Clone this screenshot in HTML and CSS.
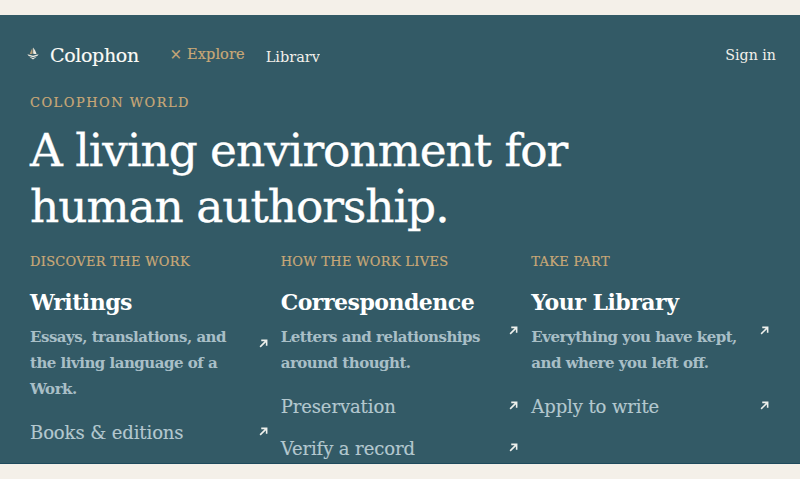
FILE: index.html
```html
<!DOCTYPE html>
<html lang="en">
<head>
<meta charset="utf-8">
<title>Colophon World</title>
<link rel="stylesheet" href="styles.css">
</head>
<body>
<main class="panel">
  <header class="nav">
    <a class="brand">
      <svg class="logo" viewBox="0 0 12 13" aria-hidden="true">
        <path class="logo-dark" d="M5.4 1 5.6 6.8 2.6 7.2C3.4 5 4.4 3 5.4 1z"/>
        <path class="logo-sail" d="M6.2.6C7.6 2.4 8.8 4.6 9.6 7.2L6.2 6.8z"/>
        <path class="logo-page" d="M.4 7.2 6 8.8l5.6-1.6-1 1.5L6 10.2 1.4 8.7z"/>
        <path class="logo-page" d="M2 9.6 6 11l4-1.4L6 12.6z"/>
      </svg>
      <span>Colophon</span>
    </a>
    <a class="explore"><span class="close">×</span>Explore</a>
    <a class="library">Library</a>
    <a class="signin">Sign in</a>
  </header>
  <p class="eyebrow">COLOPHON WORLD</p>
  <h1>A living environment for<br>human authorship.</h1>
  <section class="columns">
    <div class="column">
      <h2 class="label">DISCOVER THE WORK</h2>
      <a class="item">
        <div class="item-body"><h3>Writings</h3><p>Essays, translations, and the living language of a Work.</p></div>
        <svg class="arrow" viewBox="0 0 8 8"><path d="M1 7 6.6 1.4M2 1.2h4.8V6"/></svg>
      </a>
      <a class="item link"><span>Books &amp; editions</span><svg class="arrow" viewBox="0 0 8 8"><path d="M1 7 6.6 1.4M2 1.2h4.8V6"/></svg></a>
    </div>
    <div class="column">
      <h2 class="label">HOW THE WORK LIVES</h2>
      <a class="item">
        <div class="item-body"><h3>Correspondence</h3><p>Letters and relationships around thought.</p></div>
        <svg class="arrow" viewBox="0 0 8 8"><path d="M1 7 6.6 1.4M2 1.2h4.8V6"/></svg>
      </a>
      <a class="item link"><span>Preservation</span><svg class="arrow" viewBox="0 0 8 8"><path d="M1 7 6.6 1.4M2 1.2h4.8V6"/></svg></a>
      <a class="item link"><span>Verify a record</span><svg class="arrow" viewBox="0 0 8 8"><path d="M1 7 6.6 1.4M2 1.2h4.8V6"/></svg></a>
    </div>
    <div class="column">
      <h2 class="label">TAKE PART</h2>
      <a class="item">
        <div class="item-body"><h3>Your Library</h3><p>Everything you have kept, and where you left off.</p></div>
        <svg class="arrow" viewBox="0 0 8 8"><path d="M1 7 6.6 1.4M2 1.2h4.8V6"/></svg>
      </a>
      <a class="item link"><span>Apply to write</span><svg class="arrow" viewBox="0 0 8 8"><path d="M1 7 6.6 1.4M2 1.2h4.8V6"/></svg></a>
    </div>
  </section>
</main>
</body>
</html>
```
FILE: styles.css
```css
* { box-sizing: border-box; }
html, body { margin: 0; height: 100%; overflow: hidden; }
body {
  background: #f4f0e9;
  padding: 15px 0;
  font-family: "DejaVu Serif", "Liberation Serif", serif;
}
a { color: inherit; text-decoration: none; }
.panel {
  height: 449px;
  background: #335a66;
  overflow: hidden;
  padding: 0 30px;
  color: #fff;
  border-bottom: 1px solid #1f4a5c;
}
.nav {
  display: flex;
  align-items: center;
  height: 80px;
  margin-right: -6px;
}
.brand {
  display: flex;
  align-items: center;
  font-size: 19px;
  letter-spacing: -0.35px;
  margin-left: -3px;
  color: #fbfaf6;
  -webkit-text-stroke: 0.15px #fbfaf6;
}
.logo { width: 12px; height: 13px; margin-right: 11px; margin-top: -3px; }
.logo-sail { fill: #f0ebe0; }
.logo-dark { fill: #b99f78; }
.logo-page { fill: #eeeae0; }
.explore {
  margin-left: 31px;
  font-size: 14.5px;
  letter-spacing: 0.1px;
  color: #c9a877;
  margin-top: -3px;
  -webkit-text-stroke: 0.2px #c9a877;
}
.close { margin-right: 5px; }
.library {
  margin-left: 21px;
  font-size: 14.5px;
  color: #f2f0ea;
  height: 13px;
  line-height: 16px;
  overflow: hidden;
}
.signin {
  margin-left: auto;
  font-size: 14.2px;
  color: #f2f0ea;
}
.eyebrow {
  margin: 0;
  font-size: 13px;
  line-height: 16px;
  letter-spacing: 1.5px;
  color: #c9a877;
  -webkit-text-stroke: 0.2px #c9a877;
}
h1 {
  margin: 12px 0 0;
  font-size: 45.4px;
  line-height: 56px;
  font-weight: 400;
  letter-spacing: -1px;
  color: #fff;
  -webkit-text-stroke: 0.35px #fff;
}
.columns {
  display: grid;
  grid-template-columns: repeat(3, 1fr);
  column-gap: 12px;
  margin-top: 19px;
  align-items: start;
}
.label {
  margin: 0 0 18px;
  font-size: 13px;
  line-height: 16px;
  font-weight: 400;
  letter-spacing: 0.3px;
  color: #c9a877;
  -webkit-text-stroke: 0.2px #c9a877;
}
.item { display: flex; align-items: center; justify-content: space-between; }
.item-body { width: 222px; }
h3 {
  margin: 0 0 8px;
  font-size: 22px;
  line-height: 28px;
  font-weight: 700;
  letter-spacing: -0.5px;
  color: #fff;
}
p { margin: 0; }
.item-body p {
  font-size: 15px;
  line-height: 26px;
  font-weight: 700;
  letter-spacing: -0.5px;
  color: #a9bfc7;
}
.link {
  margin-top: 18px;
  font-size: 18px;
  line-height: 26px;
  letter-spacing: -0.1px;
  color: #b4c8cf;
  -webkit-text-stroke: 0.15px #b4c8cf;
}
.link + .link { margin-top: 16px; }
.arrow {
  width: 9px;
  height: 9px;
  flex: none;
  fill: none;
  stroke: #eef0ec;
  stroke-width: 1.4;
  margin-top: -3px;
  margin-right: 1px;
}
```
